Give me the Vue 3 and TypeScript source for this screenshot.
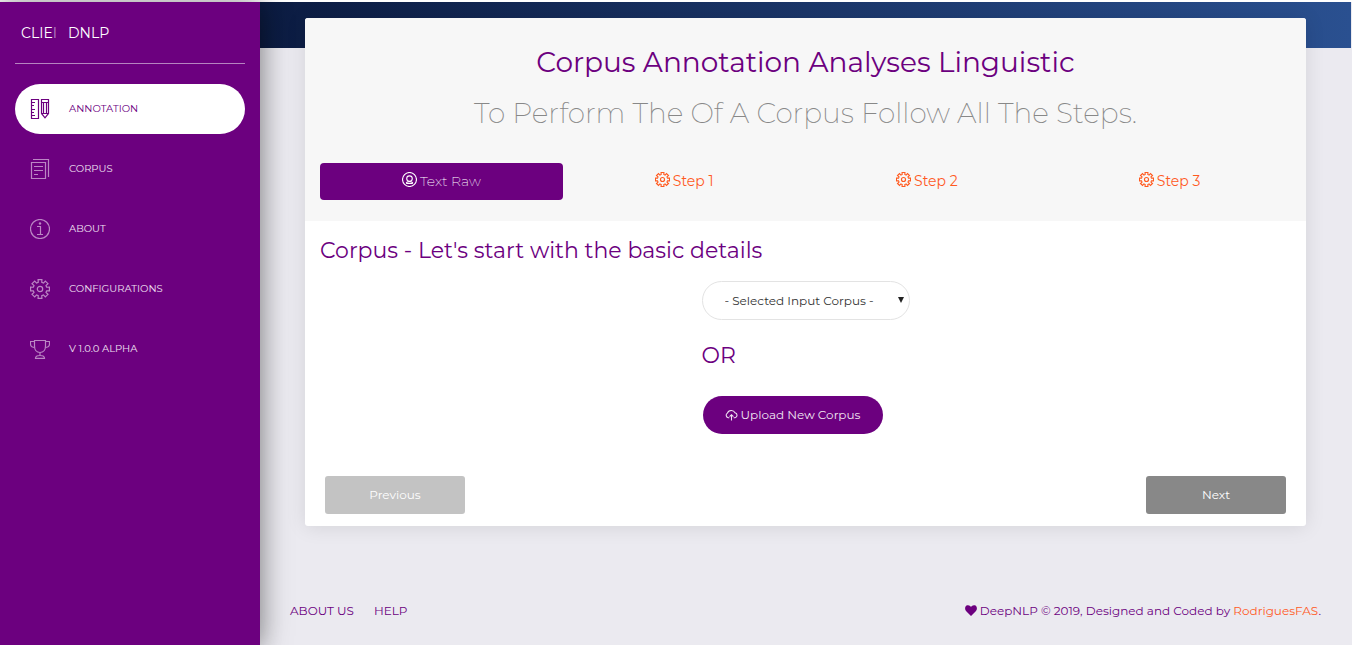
<script setup lang="ts">
import { ref } from 'vue'

interface NavItem {
  label: string
  icon: 'ruler' | 'paper' | 'info' | 'gear' | 'trophy'
}

const navItems: NavItem[] = [
  { label: 'ANNOTATION', icon: 'ruler' },
  { label: 'CORPUS', icon: 'paper' },
  { label: 'ABOUT', icon: 'info' },
  { label: 'CONFIGURATIONS', icon: 'gear' },
  { label: 'V 1.0.0 ALPHA', icon: 'trophy' },
]
const activeNav = ref(0)

const steps: string[] = ['Text Raw', 'Step 1', 'Step 2', 'Step 3']
const activeStep = ref(0)
const corpus = ref('')

// Outline of an eight-toothed gear centred on (10, 10)
function gearOutline(outer: number, inner: number): string {
  const points: string[] = []
  for (let tooth = 0; tooth < 8; tooth++) {
    const centre = (tooth * Math.PI) / 4 - Math.PI / 2
    const corners: [number, number][] = [
      [inner, -0.26],
      [outer, -0.2],
      [outer, 0.2],
      [inner, 0.26],
    ]
    for (const [radius, offset] of corners) {
      const x = 10 + radius * Math.cos(centre + offset)
      const y = 10 + radius * Math.sin(centre + offset)
      points.push(`${x.toFixed(2)} ${y.toFixed(2)}`)
    }
  }
  return `M${points.join('L')}Z`
}
const gear = gearOutline(9.6, 6.9)
</script>

<template>
  <div class="page">
    <aside class="sidebar">
      <a class="brand" href="#"><span>CLIE<span class="faded">I</span></span><span>DNLP</span></a>
      <nav class="nav">
        <a
          v-for="(item, index) in navItems"
          :key="item.label"
          href="#"
          class="nav-item"
          :class="{ active: index === activeNav }"
          @click.prevent="activeNav = index"
        >
          <svg class="nav-icon" viewBox="0 0 20 20" aria-hidden="true">
            <g v-if="item.icon === 'ruler'">
              <path d="M1.5 .5H8.5V19.5H1.5ZM2 3.5H5M2 6.5H4M2 10.5H5M2 13.5H4M2 16.5H5" />
              <path d="M11.5 .5H18.5V14.5L15 18.800L11.500 14.500ZM11.500 3.500H18.500M13.500 3.500V15M16.500 3.500V15M11.500 14.500H18.500" />
            </g>
            <g v-else-if="item.icon === 'paper'">
              <path d="M1.5 3.5H15.5V19.5H1.5ZM3 .5H18.5V18M4 7.5H13M4 11.5H13M4 15.5H8" />
            </g>
            <g v-else-if="item.icon === 'info'">
              <circle cx="10" cy="10" r="9.5" />
              <path d="M7 7.5H10.5V15.5M7 15.5H13" />
              <circle class="solid" cx="10" cy="4.500" r="1.200" />
            </g>
            <g v-else-if="item.icon === 'gear'">
              <path :d="gear" />
              <circle cx="10" cy="10" r="2.700" />
            </g>
            <g v-else>
              <path d="M4.500 1.500H15.500V7C15.500 10.500 13.500 13.500 10 13.500S4.500 10.500 4.500 7ZM4.500 2.500H.5V5C.5 7.500 2 8.500 5 8.500M15.500 2.500H19.500V5C19.500 7.500 18 8.500 15 8.500M10 13.500V16.500M5.500 19.300C5.500 17.500 7 16.500 10 16.500S14.500 17.500 14.500 19.300Z" />
            </g>
          </svg>
          <span class="label">{{ item.label }}</span>
        </a>
      </nav>
    </aside>

    <div class="main">
      <div class="band"></div>
      <main class="content">
        <section class="card">
          <header class="card-header">
            <h1>Corpus Annotation Analyses Linguistic</h1>
            <h2>To Perform The Of A Corpus Follow All The Steps.</h2>
            <div class="tabs" role="tablist">
              <button
                v-for="(step, index) in steps"
                :key="step"
                type="button"
                role="tab"
                class="tab"
                :class="{ active: index === activeStep }"
                :aria-selected="index === activeStep"
                @click="activeStep = index"
              >
                <svg class="tab-icon" viewBox="0 0 20 20" aria-hidden="true">
                  <g v-if="index === 0">
                    <circle cx="10" cy="10" r="9.300" />
                    <circle cx="10" cy="8.800" r="3.700" />
                    <path d="M5.500 14.500C7 12.500 13 12.500 14.500 14.500M5.500 15.300H14.500" />
                  </g>
                  <g v-else>
                    <path :d="gear" />
                    <circle cx="10" cy="10" r="2.700" />
                  </g>
                </svg>
                <span class="label">{{ step }}</span>
              </button>
            </div>
          </header>

          <div class="card-body">
            <h3>Corpus - Let's start with the basic details</h3>
            <div class="choices">
              <div class="select-box">
                <select v-model="corpus" aria-label="Input corpus">
                  <option value="">- Selected Input Corpus -</option>
                </select>
                <svg class="arrow" viewBox="0 0 6 6" aria-hidden="true"><path d="M0 0H6L3 6Z" /></svg>
              </div>
              <h3 class="or">OR</h3>
              <button type="button" class="upload">
                <svg class="cloud" viewBox="0 0 24 24" aria-hidden="true">
                  <path d="M8 16H6A4.500 4.500 0 0 1 4.500 7.600A7.500 7 0 0 1 18.500 6.800A4.700 4.700 0 0 1 18.500 16H16M12 21V10.500M8.500 14L12 10.500L15.500 14" />
                </svg>
                <span class="label">Upload New Corpus</span>
              </button>
            </div>
          </div>

          <div class="card-footer">
            <button type="button" class="step-button" disabled><span class="label">Previous</span></button>
            <button type="button" class="step-button"><span class="label">Next</span></button>
          </div>
        </section>
      </main>

      <footer class="page-footer">
        <nav class="links">
          <a href="#">ABOUT US</a>
          <a href="#">HELP</a>
        </nav>
        <div class="credit">
          <svg class="heart" viewBox="0 0 24 22" aria-hidden="true">
            <path d="M12 22L2 12C-1 8 0 3 3 1.200C6.500 -.8 10 .5 12 4C14 .5 17.500 -.8 21 1.200C24 3 25 8 22 12Z" />
          </svg>
          <span>DeepNLP © 2019, Designed and Coded by <a class="author" href="#">RodriguesFAS</a>.</span>
        </div>
      </footer>
    </div>
  </div>
</template>

<style>
body {
  margin: 0;
  background: #ebeaf0;
}
</style>

<style scoped>
* {
  box-sizing: border-box;
}
.page {
  display: flex;
  min-height: 100vh;
  padding-right: 1px;
  border-top: 2px solid #c9c9c9;
  border-image: linear-gradient(#fff 50%, #b9b9b9 50%) 2 0 0 0;
  font-family: Montserrat, Inter, "Open Sans", sans-serif;
  font-size: 12px;
  color: #6c007f;
}
a {
  color: inherit;
  text-decoration: none;
}
button,
select {
  font: inherit;
}
.label {
  display: block;
  padding-bottom: 2px;
}
.sidebar {
  position: relative;
  flex: 0 0 260px;
  padding: 0 15px;
  background: #6c007f;
  color: #fff;
  box-shadow: 0 2px 22px rgba(0, 0, 0, 0.2), 0 2px 30px rgba(0, 0, 0, 0.35);
}
.brand {
  display: flex;
  align-items: center;
  gap: 11px;
  height: 62px;
  padding-left: 6px;
  border-bottom: 1px solid #b684c0;
  font-size: 14px;
}
.faded {
  opacity: 0.5;
}
.nav {
  display: flex;
  flex-direction: column;
  gap: 10px;
  padding-top: 20px;
}
.nav-item {
  display: flex;
  align-items: center;
  gap: 19px;
  height: 50px;
  padding: 0 15px;
  border-radius: 25px;
  font-size: 10px;
  color: #f0e0f2;
}
.nav-item.active {
  background: #fff;
  color: #6c007f;
}
svg {
  flex: none;
  fill: none;
  stroke: currentColor;
}
.nav-icon {
  width: 20px;
  height: 20px;
  opacity: 0.6;
  stroke-width: 1.2;
}
.active .nav-icon {
  opacity: 1;
}
.solid {
  fill: currentColor;
  stroke: none;
}
.main {
  display: flex;
  flex: 1;
  flex-direction: column;
  min-width: 0;
}
.band {
  height: 46px;
  background: linear-gradient(to right, #0c1c42, #2a5090);
}
.content {
  margin-top: -30px;
  padding: 0 45px;
}
.card {
  overflow: hidden;
  border-radius: 3px;
  background: #fff;
  box-shadow: 0 1px 20px rgba(0, 0, 0, 0.1);
}
.card-header {
  padding: 24px 15px 21px;
  background: #f7f7f7;
  text-align: center;
}
h1,
h2,
h3 {
  margin: 0;
  font-weight: 400;
}
h1 {
  font-size: 28px;
  line-height: 40px;
}
h2 {
  margin-top: 10px;
  font-size: 28px;
  font-weight: 200;
  line-height: 42px;
  color: #888;
}
.tabs {
  display: grid;
  grid-template-columns: repeat(4, 1fr);
  margin-top: 29px;
}
.tab {
  display: flex;
  align-items: center;
  justify-content: center;
  gap: 3px;
  height: 37px;
  padding: 0;
  border: 0;
  border-radius: 4px;
  background: transparent;
  color: #ff5a1f;
  font-size: 14px;
}
.tab.active {
  background: #6c007f;
  color: #fff;
  font-weight: 200;
}
.tab-icon {
  width: 15px;
  height: 15px;
  margin-bottom: 5px;
  stroke-width: 1.5;
}
.card-body {
  padding: 15px;
}
h3 {
  font-size: 22px;
  line-height: 30px;
}
.choices {
  width: 208px;
  margin: 15px auto 0;
}
.select-box {
  position: relative;
}
select {
  display: block;
  width: 100%;
  height: 39px;
  padding: 0 22px;
  border: 1px solid #e3e3e3;
  border-radius: 20px;
  background: #fff;
  color: #333;
  appearance: none;
}
.arrow {
  position: absolute;
  top: 16px;
  right: 6px;
  width: 6px;
  height: 6px;
  fill: #222;
  stroke: none;
  pointer-events: none;
}
.or {
  margin: 21px 0 25px;
}
.upload {
  display: flex;
  align-items: center;
  justify-content: center;
  gap: 3px;
  width: 180px;
  height: 38px;
  margin-left: 1px;
  padding: 0;
  border: 0;
  border-radius: 19px;
  background: #6c007f;
  color: #f0e5f2;
}
.cloud {
  width: 13px;
  height: 13px;
  stroke-width: 2;
}
.card-footer {
  display: flex;
  justify-content: space-between;
  padding: 27px 20px 12px;
}
.step-button {
  width: 140px;
  height: 38px;
  padding: 0;
  border: 0;
  border-radius: 3px;
  background: #888;
  color: #fff;
}
.step-button:disabled {
  opacity: 0.5;
}
.page-footer {
  display: flex;
  justify-content: space-between;
  margin-top: auto;
  padding: 24px 30px;
  line-height: 20px;
}
.links {
  display: flex;
  gap: 20px;
}
.credit {
  display: flex;
  align-items: center;
  gap: 3px;
}
.heart {
  width: 12px;
  height: 11px;
  margin-bottom: 2px;
  fill: currentColor;
  stroke: none;
}
.author {
  color: #ff5a1f;
}
</style>
